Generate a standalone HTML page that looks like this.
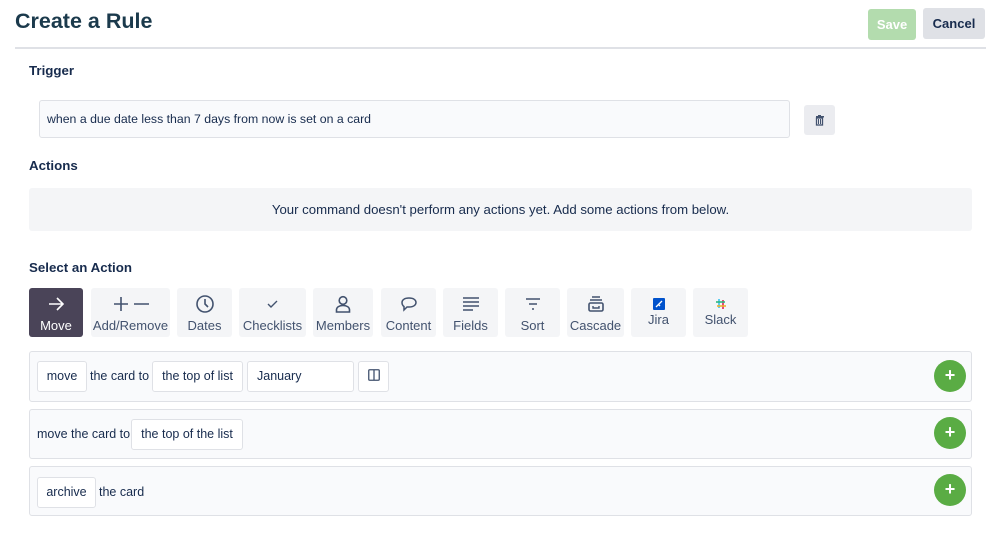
<!DOCTYPE html>
<html><head><style>
body{margin:0;width:999px;height:544px;background:#fff;font-family:"Liberation Sans",Arial,sans-serif;color:#172b4d;position:relative;overflow:hidden}
.a{position:absolute}
.h{font-weight:bold;font-size:13.3px;color:#172b4d}
.btn{position:absolute;top:288px;height:49px;background:#f4f5f7;border-radius:3px;font-size:13px;color:#42526e;text-align:center}
.btn .l{position:absolute;left:0;right:0;top:30px}
.btn svg{position:absolute;left:50%;top:6px;transform:translateX(-50%)}
.row{position:absolute;left:29px;width:941px;background:#f9fafc;border:1px solid #dfe1e6;border-radius:3px}
.box{position:absolute;background:#fff;border:1px solid #dfe1e6;border-radius:3px;font-size:12.5px;line-height:29px;text-align:center;color:#172b4d}
.t{position:absolute;font-size:12.5px;color:#172b4d}
.plus{position:absolute;left:904px;width:32px;height:32px;border-radius:50%;background:#5aac44;color:#fff;font-weight:bold;font-size:18px;line-height:31px;text-align:center}
</style></head><body>
<div class="a" style="left:15px;top:9px;font-size:21.5px;font-weight:bold;color:#1b3a4c">Create a Rule</div>
<div class="a" style="left:868px;top:9px;width:48px;height:31px;background:#b3dcae;border-radius:3px;color:#fff;font-weight:bold;font-size:13px;line-height:31px;text-align:center">Save</div>
<div class="a" style="left:923px;top:8px;width:62px;height:31px;background:#dfe1e6;border-radius:3px;color:#172b4d;font-weight:bold;font-size:13px;line-height:31px;text-align:center">Cancel</div>
<div class="a" style="left:15px;top:47px;width:971px;height:2px;background:#dfe1e6"></div>
<div class="a h" style="left:29px;top:63px">Trigger</div>
<div class="a" style="left:39px;top:100px;width:749px;height:36px;background:#f9fafc;border:1px solid #dfe1e6;border-radius:3px;font-size:12.3px;line-height:36px;text-indent:7px">when a due date less than 7 days from now is set on a card</div>
<div class="a" style="left:804px;top:105px;width:31px;height:30px;background:#ebecf0;border-radius:3px">
<svg width="31" height="30" viewBox="0 0 31 30"><rect x="12" y="11" width="8" height="1.5" fill="#42526e"/><rect x="14" y="10" width="3" height="1.5" fill="#42526e"/><rect x="12.5" y="13" width="6" height="7" fill="none" stroke="#42526e" stroke-width="1.3"/><line x1="14.5" y1="14" x2="14.5" y2="19" stroke="#42526e"/><line x1="16.5" y1="14" x2="16.5" y2="19" stroke="#42526e"/></svg></div>
<div class="a h" style="left:29px;top:158px">Actions</div>
<div class="a" style="left:29px;top:188px;width:943px;height:43px;background:#f4f5f7;border-radius:3px;font-size:13.2px;line-height:43px;text-align:center;color:#172b4d">Your command doesn't perform any actions yet. Add some actions from below.</div>
<div class="a h" style="left:29px;top:260px">Select an Action</div>

<div class="btn" style="left:29px;width:54px;background:#4a4458;color:#fff"><svg width="20" height="20" viewBox="0 0 20 20"><path d="M3 10h14M11 4l6 6-6 6" stroke="#fff" stroke-width="1.6" fill="none"/></svg><div class="l">Move</div></div>
<div class="btn" style="left:91px;width:79px"><svg width="40" height="20" viewBox="0 0 40 20"><path d="M3 10h14M10 3v14M23 10h15" stroke="#42526e" stroke-width="1.6" fill="none"/></svg><div class="l">Add/Remove</div></div>
<div class="btn" style="left:177px;width:55px"><svg width="20" height="20" viewBox="0 0 20 20"><circle cx="10" cy="10" r="8" stroke="#42526e" stroke-width="1.6" fill="none"/><path d="M10 5v5l3 3" stroke="#42526e" stroke-width="1.6" fill="none"/></svg><div class="l">Dates</div></div>
<div class="btn" style="left:239px;width:67px"><svg width="20" height="20" viewBox="0 0 20 20"><path d="M5 10l3 3 6-6" stroke="#42526e" stroke-width="1.4" fill="none"/></svg><div class="l">Checklists</div></div>
<div class="btn" style="left:313px;width:60px"><svg width="20" height="20" viewBox="0 0 20 20"><circle cx="10" cy="6.5" r="3.8" stroke="#42526e" stroke-width="1.6" fill="none"/><path d="M3.5 18v-2c0-3 3-4.5 6.5-4.5s6.5 1.5 6.5 4.5v2z" stroke="#42526e" stroke-width="1.6" fill="none"/></svg><div class="l">Members</div></div>
<div class="btn" style="left:381px;width:55px"><svg width="20" height="20" viewBox="0 0 20 20"><path d="M10 4c4.5 0 7 2 7 4.5S14.5 13 10 13H8l-3 3v-3.5C3.5 11.5 3 10 3 8.5 3 6 5.5 4 10 4z" stroke="#42526e" stroke-width="1.5" fill="none"/></svg><div class="l">Content</div></div>
<div class="btn" style="left:443px;width:55px"><svg width="20" height="20" viewBox="0 0 20 20"><path d="M2 4h16M2 8h16M2 12h16M2 16h10" stroke="#42526e" stroke-width="1.6"/></svg><div class="l">Fields</div></div>
<div class="btn" style="left:505px;width:55px"><svg width="20" height="20" viewBox="0 0 20 20"><path d="M3 5h14M6 10h8M9 15h2" stroke="#42526e" stroke-width="1.6"/></svg><div class="l">Sort</div></div>
<div class="btn" style="left:567px;width:57px"><svg width="20" height="20" viewBox="0 0 20 20"><path d="M6 3h8M4 6h12" stroke="#42526e" stroke-width="1.6"/><rect x="3" y="9" width="14" height="8" rx="1.5" stroke="#42526e" stroke-width="1.6" fill="none"/><path d="M7 12v2h6v-2" stroke="#42526e" stroke-width="1.4" fill="none"/></svg><div class="l">Cascade</div></div>
<div class="btn" style="left:631px;width:55px"><svg width="20" height="20" viewBox="0 0 20 20"><rect x="4" y="4" width="12" height="12" rx="1" fill="#0052cc"/><path d="M7 13l6-6M9 10l2 2" stroke="#fff" stroke-width="1.3"/></svg><div class="l" style="top:24px">Jira</div></div>
<div class="btn" style="left:693px;width:55px"><svg width="20" height="20" viewBox="0 0 20 20"><path d="M8 5v9" stroke="#36c5f0" stroke-width="1.6"/><path d="M12 6v9" stroke="#e01e5a" stroke-width="1.6"/><path d="M5 8h9" stroke="#2eb67d" stroke-width="1.6"/><path d="M6 12h9" stroke="#ecb22e" stroke-width="1.6"/></svg><div class="l" style="top:24px">Slack</div></div>

<div class="row" style="top:351px;height:49px">
<div class="box" style="left:7px;top:9px;width:48px">move</div>
<div class="t" style="left:60px;top:17px">the card to</div>
<div class="box" style="left:122px;top:9px;width:89px">the top of list</div>
<div class="box" style="left:217px;top:9px;width:105px;text-align:left;text-indent:9px">January</div>
<div class="box" style="left:328px;top:9px;width:29px"><svg width="12" height="12" viewBox="0 0 12 12" style="vertical-align:-1px"><rect x="0.75" y="0.75" width="10.5" height="10.5" rx="1" fill="none" stroke="#42526e" stroke-width="1.3"/><line x1="6" y1="1" x2="6" y2="11" stroke="#42526e" stroke-width="1.3"/></svg></div>
<div class="plus" style="top:8px">+</div>
</div>
<div class="row" style="top:409px;height:48px">
<div class="t" style="left:7px;top:17px">move the card to</div>
<div class="box" style="left:101px;top:9px;width:110px">the top of the list</div>
<div class="plus" style="top:7px">+</div>
</div>
<div class="row" style="top:466px;height:48px">
<div class="box" style="left:7px;top:10px;width:57px">archive</div>
<div class="t" style="left:69px;top:18px">the card</div>
<div class="plus" style="top:7px">+</div>
</div>
</body></html>
